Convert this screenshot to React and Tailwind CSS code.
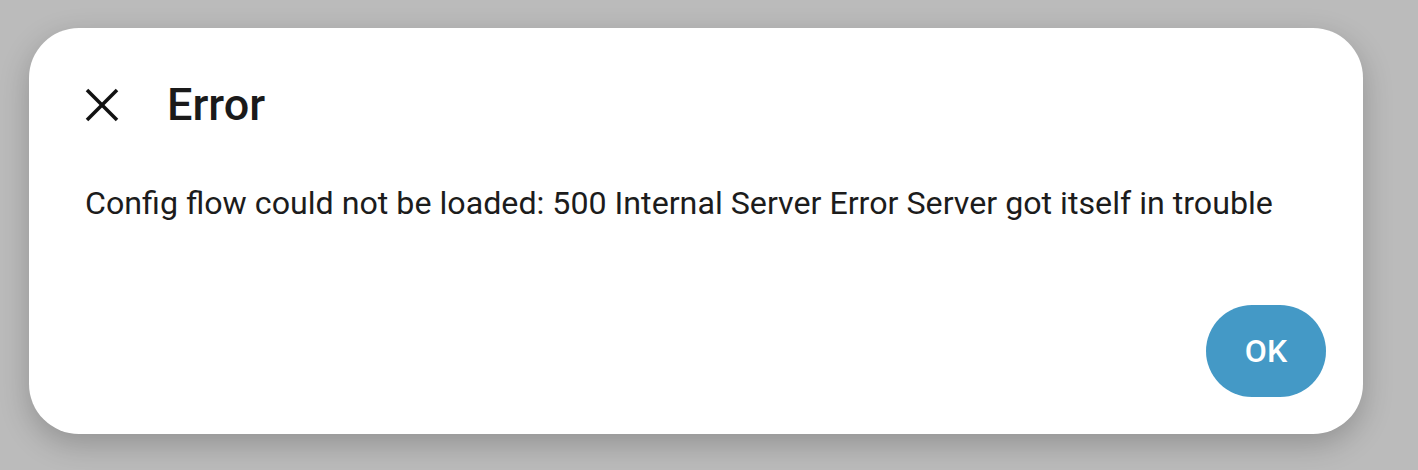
import React from 'react';

const CloseIcon = () => (
  <svg width="34" height="34" viewBox="0 0 34 34" fill="none" stroke="#111" strokeWidth="3.6">
    <line x1="2" y1="2" x2="32" y2="32" />
    <line x1="32" y1="2" x2="2" y2="32" />
  </svg>
);

const App = () => {
  return (
    <div className="h-[470px] w-full bg-[#bbbbbb] pt-[28px] pl-[29px]" style={{ fontFamily: 'Roboto, "Noto Sans", sans-serif' }}>
      <div className="flex h-[406px] w-[1334px] flex-col rounded-[50px] bg-white shadow-[0_10px_30px_rgba(0,0,0,0.22)]">
        {/* header */}
        <div className="flex items-center pl-[56px] pt-[54px]">
          <CloseIcon />
          <h2 className="ml-[48px] text-[45px] leading-none font-medium text-[#1a1a1a]">Error</h2>
        </div>
        {/* body */}
        <p className="mt-[60px] pl-[56px] text-[32.2px] leading-none text-[#1c1c1c]">
          Config flow could not be loaded: 500 Internal Server Error Server got itself in trouble
        </p>
        <div className="mt-auto flex justify-end pr-[37px] pb-[37px]">
          <button className="h-[92px] w-[120px] rounded-full bg-[#4499c6] text-[32px] font-medium text-white">OK</button>
        </div>
      </div>
    </div>
  );
};

export default App;
